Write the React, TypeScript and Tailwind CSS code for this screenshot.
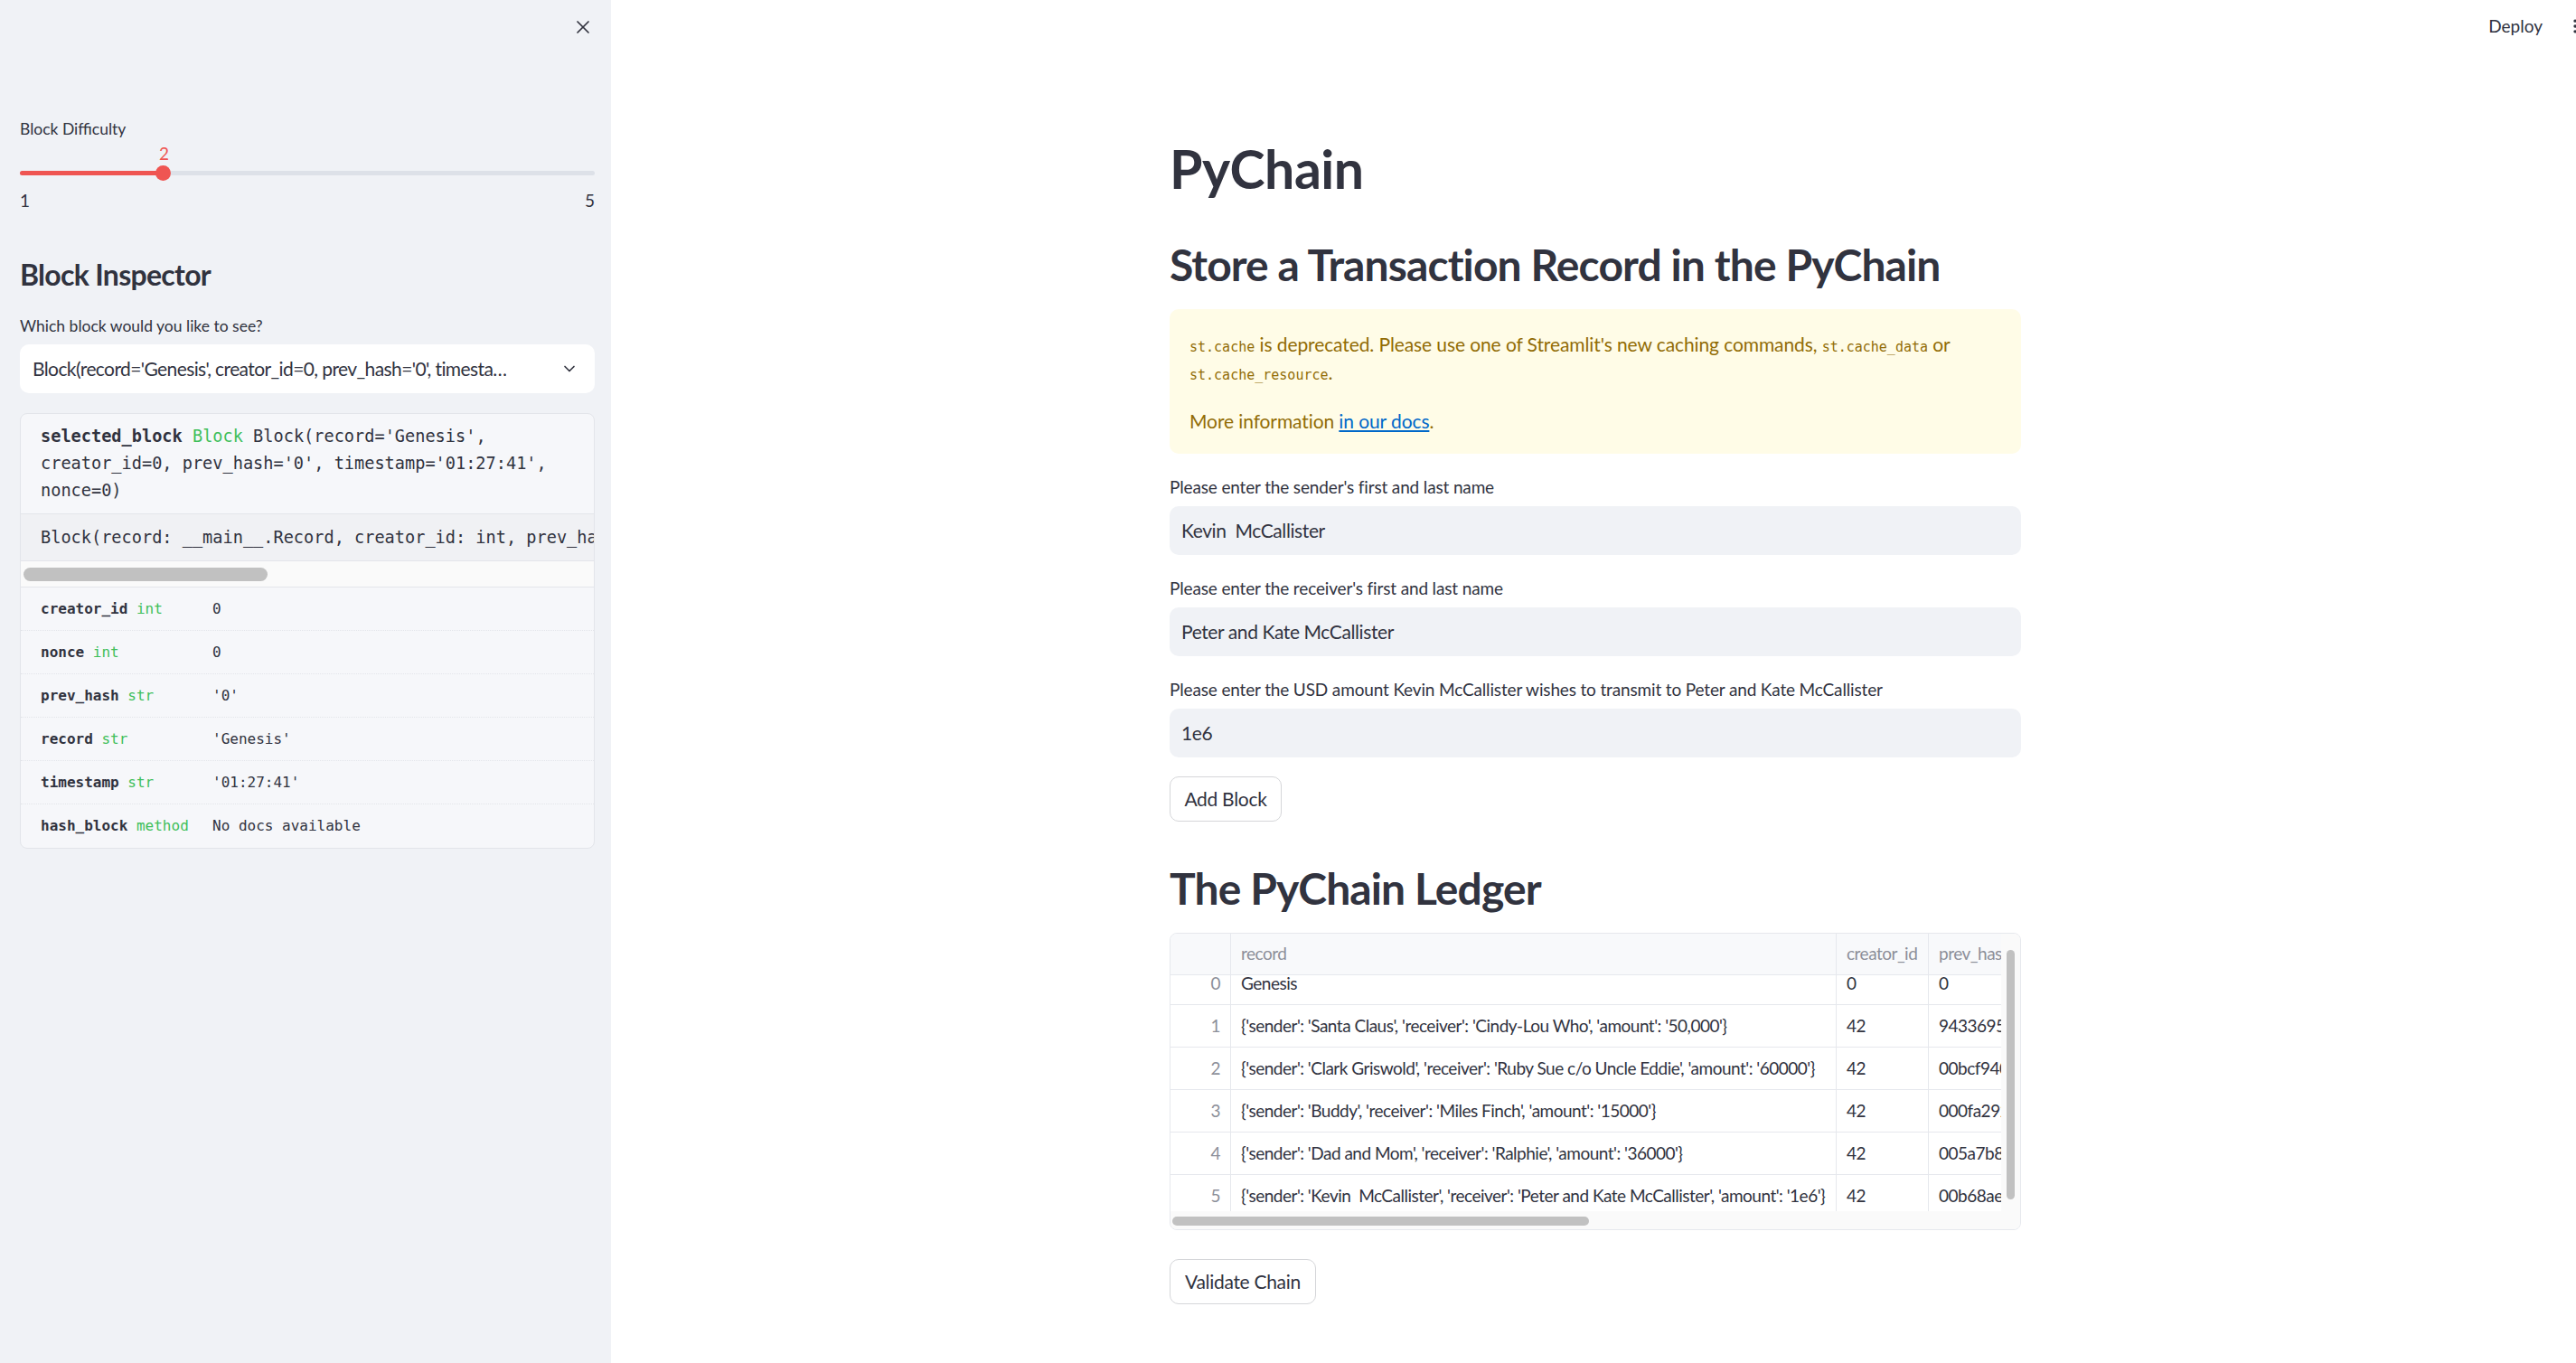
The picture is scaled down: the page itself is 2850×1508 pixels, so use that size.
import { X, ChevronDown, EllipsisVertical } from "lucide-react";

const ledger = [
  { i: 0, record: "Genesis", creator: "0", hash: "0" },
  { i: 1, record: "{'sender': 'Santa Claus', 'receiver': 'Cindy-Lou Who', 'amount': '50,000'}", creator: "42", hash: "9433695e" },
  { i: 2, record: "{'sender': 'Clark Griswold', 'receiver': 'Ruby Sue c/o Uncle Eddie', 'amount': '60000'}", creator: "42", hash: "00bcf940" },
  { i: 3, record: "{'sender': 'Buddy', 'receiver': 'Miles Finch', 'amount': '15000'}", creator: "42", hash: "000fa292" },
  { i: 4, record: "{'sender': 'Dad and Mom', 'receiver': 'Ralphie', 'amount': '36000'}", creator: "42", hash: "005a7b87" },
  { i: 5, record: "{'sender': 'Kevin  McCallister', 'receiver': 'Peter and Kate McCallister', 'amount': '1e6'}", creator: "42", hash: "00b68ae0" },
];

const attrs = [
  ["creator_id", "int", "0"],
  ["nonce", "int", "0"],
  ["prev_hash", "str", "'0'"],
  ["record", "str", "'Genesis'"],
  ["timestamp", "str", "'01:27:41'"],
  ["hash_block", "method", "No docs available"],
];

function Sidebar() {
  return (
    <aside className="w-[676px] shrink-0 bg-[#f0f2f6] pl-[22px] pr-[18px] text-[#31333f]">
      <div className="flex h-[60px] items-center justify-end">
        <X size={24} strokeWidth={1.7} className="mr-[1px]" />
      </div>

      <div className="mt-[69px] h-[28px] text-[17.5px] leading-[28px]">Block Difficulty</div>

      <div className="h-[26px] pl-[154px] text-[19px] leading-[26px] text-[#ef5552]">2</div>
      <div className="relative h-[17px]">
        <div className="absolute left-0 right-0 top-[6px] h-[5px] rounded-full bg-[#dde1e8]">
          <div className="h-full w-[159px] rounded-full bg-[#ef5552]" />
        </div>
        <div className="absolute left-[150px] top-0 h-[17px] w-[17px] rounded-full bg-[#ef5552]" />
      </div>
      <div className="mt-[10px] flex h-[24px] justify-between text-[19px] leading-[24px]">
        <span>1</span>
        <span>5</span>
      </div>

      <div className="mt-[50px] h-[40px] text-[32px] font-bold leading-[40px] tracking-[-0.7px]">Block Inspector</div>

      <div className="mt-[23px] h-[28px] text-[17.5px] leading-[28px]">Which block would you like to see?</div>

      <div className="mt-[6px] flex h-[54px] items-center justify-between rounded-[10px] bg-white pl-[14px] pr-[18px]">
        <span className="truncate text-[21px] tracking-[-0.6px]">
          Block(record='Genesis', creator_id=0, prev_hash='0', timesta…
        </span>
        <ChevronDown size={20} strokeWidth={2} className="ml-[30px] shrink-0" />
      </div>

      <div className="mt-[22px] overflow-hidden rounded-[8px] border border-[#e3e5ea] bg-[#f6f7fa] font-['DejaVu_Sans_Mono',monospace]">
        <div className="px-[22px] pb-[10px] pt-[10px] text-[18.6px] leading-[30px]">
          <div className="whitespace-pre">
            <span className="font-bold">selected_block</span> <span className="text-[#3fbf5a]">Block</span> Block(record='Genesis',
          </div>
          <div className="whitespace-pre">creator_id=0, prev_hash='0', timestamp='01:27:41',</div>
          <div className="whitespace-pre">nonce=0)</div>
        </div>
        <div className="flex h-[52px] items-center overflow-hidden whitespace-pre border-t border-[#e3e5ea] bg-[#f0f1f4] px-[22px] text-[18.6px]">
          Block(record: __main__.Record, creator_id: int, prev_hash: str, timestamp: str, nonce: int = 0)
        </div>
        <div className="h-[30px] border-y border-[#e3e5ea] bg-[#fafafa] pl-[3px] pt-[7px]">
          <div className="h-[15px] w-[270px] rounded-full bg-[#c1c1c1]" />
        </div>
        <div className="text-[16px]">
          {attrs.map(([name, type, value], idx) => (
            <div
              key={name}
              className={`flex h-[48px] items-center px-[22px] ${
                idx < attrs.length - 1 ? "border-b border-dotted border-[#e3e5ea]" : ""
              }`}
            >
              <div className="w-[190px] shrink-0 whitespace-pre">
                <span className="font-bold">{name}</span> <span className="text-[#3fbf5a]">{type}</span>
              </div>
              <div className="whitespace-pre">{value}</div>
            </div>
          ))}
        </div>
      </div>
    </aside>
  );
}

function Field({ label, value }: { label: string; value: string }) {
  return (
    <div className="mt-[23px]">
      <div className="h-[28px] text-[19px] leading-[28px] tracking-[-0.15px]">{label}</div>
      <div className="mt-[7px] flex h-[54px] items-center whitespace-pre rounded-[10px] bg-[#f0f2f6] px-[13px] text-[21px] tracking-[-0.4px]">
        {value}
      </div>
    </div>
  );
}

function Ledger() {
  const cell = "flex shrink-0 items-center overflow-hidden whitespace-pre px-[11px]";
  return (
    <div className="mt-[20px] flex h-[329px] flex-col overflow-hidden rounded-[8px] border border-[#e6e8ed] text-[19px] tracking-[-0.5px]">
      <div className="flex min-h-0 flex-1">
        <div className="flex min-w-0 flex-1 flex-col overflow-hidden">
          <div className="flex h-[46px] shrink-0 border-b border-[#e6e8ed] bg-[#f8f9fb] text-[#8c8f99]">
            <div className="w-[67px] shrink-0 border-r border-[#e6e8ed]" />
            <div className={`${cell} w-[670px] border-r border-[#e6e8ed]`}>record</div>
            <div className={`${cell} w-[102px] border-r border-[#e6e8ed]`}>creator_id</div>
            <div className={`${cell} w-[140px]`}>prev_hash</div>
          </div>
          <div className="min-h-0 flex-1 overflow-hidden">
            <div className="-mt-[14px]">
              {ledger.map((r) => (
                <div key={r.i} className="flex h-[47px] border-b border-[#e6e8ed]">
                  <div className={`${cell} w-[67px] justify-end border-r border-[#e6e8ed] text-[#8c8f99]`}>{r.i}</div>
                  <div className={`${cell} w-[670px] border-r border-[#e6e8ed]`}>{r.record}</div>
                  <div className={`${cell} w-[102px] border-r border-[#e6e8ed]`}>{r.creator}</div>
                  <div className={`${cell} w-[140px]`}>{r.hash}</div>
                </div>
              ))}
            </div>
          </div>
        </div>
        <div className="w-[21px] shrink-0 bg-[#fafafa] pl-[6px] pt-[18px]">
          <div className="h-[276px] w-[9px] rounded-full bg-[#c1c1c1]" />
        </div>
      </div>
      <div className="h-[20px] shrink-0 bg-[#fafafa] pl-[2px] pt-[6px]">
        <div className="h-[10px] w-[461px] rounded-full bg-[#c1c1c1]" />
      </div>
    </div>
  );
}

export default function App() {
  return (
    <div className="flex h-[1508px] w-full overflow-hidden font-['Lato',sans-serif] text-[#31333f]">
      <Sidebar />
      <main className="flex min-w-0 flex-1 flex-col overflow-hidden bg-white pl-[4px]">
        <div className="flex h-[58px] shrink-0 items-center justify-end">
          <span className="text-[19px]">Deploy</span>
          <EllipsisVertical size={20} className="-mr-[9px] ml-[26px]" />
        </div>

        <div className="mx-auto w-[942px]">
          <h1 className="mt-[94px] h-[70px] text-[59px] font-bold leading-[70px] tracking-[-0.5px]">PyChain</h1>
          <h2 className="mt-[42px] h-[58px] text-[48px] font-bold leading-[58px] tracking-[-0.9px]">
            Store a Transaction Record in the PyChain
          </h2>

          <div className="mt-[20px] h-[160px] rounded-[10px] bg-[#fffce7] px-[22px] pt-[23px] text-[21px] tracking-[-0.1px] text-[#926c05]">
            <div className="h-[31px] leading-[31px]">
              <code className="font-['DejaVu_Sans_Mono',monospace] text-[15px] tracking-normal">st.cache</code> is deprecated. Please use
              one of Streamlit's new caching commands,{" "}
              <code className="font-['DejaVu_Sans_Mono',monospace] text-[15px] tracking-normal">st.cache_data</code> or
            </div>
            <div className="h-[31px] leading-[31px]">
              <code className="font-['DejaVu_Sans_Mono',monospace] text-[15px] tracking-normal">st.cache_resource</code>.
            </div>
            <div className="mt-[23px] h-[31px] leading-[31px]">
              More information <span className="text-[#0068c9] underline">in our docs</span>.
            </div>
          </div>

          <Field label="Please enter the sender's first and last name" value="Kevin  McCallister" />
          <Field label="Please enter the receiver's first and last name" value="Peter and Kate McCallister" />
          <Field
            label="Please enter the USD amount Kevin McCallister wishes to transmit to Peter and Kate McCallister"
            value="1e6"
          />

          <button className="mt-[21px] h-[50px] w-[124px] rounded-[10px] border border-[#d5d6d9] bg-white text-[21px] tracking-[-0.3px]">
            Add Block
          </button>

          <h2 className="mt-[45px] h-[58px] text-[48px] font-bold leading-[58px] tracking-[-0.9px]">The PyChain Ledger</h2>

          <Ledger />

          <button className="mt-[32px] h-[50px] w-[162px] rounded-[10px] border border-[#d5d6d9] bg-white text-[21px] tracking-[-0.3px]">
            Validate Chain
          </button>
        </div>
      </main>
    </div>
  );
}
